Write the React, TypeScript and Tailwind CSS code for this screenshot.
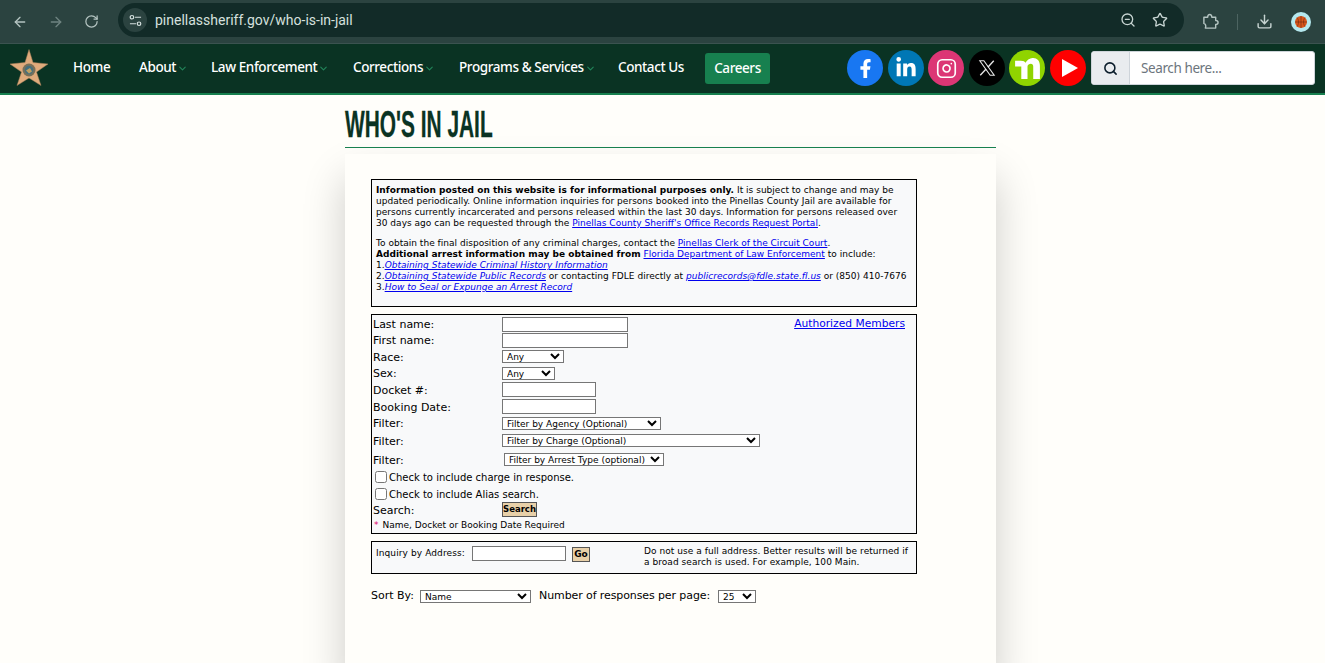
import React from "react";
import { ArrowLeft, ArrowRight, RotateCw, ZoomOut, Star, Download, ChevronDown, Search, Instagram } from "lucide-react";
import { FaFacebookF, FaLinkedinIn } from "react-icons/fa";

const V = "font-['DejaVu_Sans',Verdana,sans-serif]";

function NavItem({ label, caret, cls }: { label: string; caret?: boolean; cls: string }) {
  return (
    <a className={`flex items-center mb-[3px] text-white text-[13.5px] tracking-[-0.4px] font-medium whitespace-nowrap shrink-0 ${cls}`}>
      {label}
      {caret && <ChevronDown size={11} strokeWidth={2.4} className="ml-[1px] mt-[2px] text-[#23855a] shrink-0" />}
    </a>
  );
}

function Social({ bg, children, ml }: { bg: string; children: React.ReactNode; ml: string }) {
  return <div className={`w-9 h-9 shrink-0 mb-[1px] rounded-full flex items-center justify-center text-white ${bg} ${ml}`}>{children}</div>;
}

function Row({ label, h, lt = "mt-[2px]", children }: { label: string; h: string; lt?: string; children?: React.ReactNode }) {
  return (
    <div className={`flex items-center ${h}`}>
      <span className={`w-[129px] shrink-0 text-[11px] text-black ${lt}`}>{label}</span>
      {children}
    </div>
  );
}

const sel = "h-[13px] border border-[#767676] bg-white text-[9px] text-black rounded-none leading-none";
const inp = "h-[15px] border border-[#767676] bg-white block";
const a = "text-[#0000ee] underline";

export default function App() {
  return (
    <div className="w-[1325px] h-[663px] overflow-hidden bg-[#fffefa] font-['Noto_Sans',sans-serif]">
      {/* browser bar */}
      <div className="h-[44px] bg-[#2b4340] border-b border-[#3b5350] flex items-center">
        <ArrowLeft size={16} className="ml-[12px] text-[#b4c4c1] shrink-0" />
        <ArrowRight size={16} className="ml-[20px] text-[#6f8481] shrink-0" />
        <RotateCw size={15} className="ml-[20px] text-[#b4c4c1] shrink-0" />
        <div className="ml-[19px] w-[1066px] h-[34px] shrink-0 rounded-full bg-[#122b28] flex items-center mb-[3px]">
          <div className="ml-[5px] w-6 h-6 rounded-full bg-[#2b4340] flex items-center justify-center">
            <svg viewBox="0 0 14 14" className="w-[13px] h-[13px] text-[#d5e0de]" fill="none" stroke="currentColor" strokeWidth="1.3">
              <circle cx="3.2" cy="3.5" r="1.9" />
              <path d="M6.5 3.5H13M1 10.5H7.5" />
              <circle cx="10.8" cy="10.5" r="1.9" />
            </svg>
          </div>
          <span className="ml-[8px] text-[14px] text-[#d5e0de] font-['Roboto',sans-serif]">pinellassheriff.gov/who-is-in-jail</span>
          <ZoomOut size={16} className="ml-auto text-[#c7d4d2]" />
          <Star size={16} className="ml-[16px] mr-[16px] text-[#c7d4d2]" />
        </div>
        <svg viewBox="0 0 18 18" className="ml-[18px] w-[17px] h-[17px] shrink-0 text-[#b4c4c1]" fill="none" stroke="currentColor" strokeWidth="1.5" strokeLinejoin="round">
          <path d="M2 4.5H6C6 2.5 7 1.5 8.2 1.5C9.4 1.5 10.4 2.5 10.4 4.5H14.5V8C16.5 8 17 9 17 10C17 11 16.5 12 14.5 12V16H3.5C4.5 14 4 11.5 2 11Z" />
        </svg>
        <div className="ml-[18px] w-px h-[16px] bg-[#4d6461] shrink-0" />
        <Download size={17} className="ml-[18px] text-[#c7d4d2] shrink-0" />
        <svg viewBox="0 0 20 20" className="ml-[18px] w-5 h-5 shrink-0">
          <circle cx="10" cy="10" r="10" fill="#b5e8ee" />
          <circle cx="10" cy="10" r="6" fill="#d9561c" />
          <path d="M10 4V16M4 10H16M6 5.5C8 8 8 12 6 14.5M14 5.5C12 8 12 12 14 14.5" stroke="#6b2a10" strokeWidth="0.6" fill="none" />
        </svg>
      </div>

      {/* nav */}
      <nav className="h-[51px] bg-[#0a3323] border-b-2 border-[#17804f] flex items-center">
        <svg viewBox="0 0 40 38" className="ml-[9px] w-[40px] h-[38px] shrink-0 mb-[1px]">
          <path d="M20 0.5 L24 13.5 L39 15 L27.5 23 L32 36.5 L20 29 L8 36.5 L12.5 23 L1 15 L16 13.5 Z" fill="#e0ab7c" stroke="#a87f58" strokeWidth="0.5" />
          <circle cx="20" cy="21" r="6.5" fill="#77705a" />
          <circle cx="20" cy="21" r="4.2" fill="#46707c" />
          <path d="M17 21.5 L21 19 L23 22.5 L20 24.5 Z" fill="#c09f62" />
        </svg>
        <NavItem label="Home" cls="ml-[24px] w-[36px]" />
        <NavItem label="About" caret cls="ml-[30px] w-[47px]" />
        <NavItem label="Law Enforcement" caret cls="ml-[25px] w-[116px]" />
        <NavItem label="Corrections" caret cls="ml-[26px] w-[81px]" />
        <NavItem label="Programs & Services" caret cls="ml-[25px] w-[134px]" />
        <NavItem label="Contact Us" cls="ml-[25px] w-[67px]" />
        <a className="ml-[20px] w-[65px] h-[31px] shrink-0 rounded-[3px] bg-[#17804f] text-white text-[13.5px] tracking-[-0.4px] font-medium flex items-center justify-center mb-[1px]">Careers</a>
        <Social bg="bg-[#1877f2]" ml="ml-[77px]"><FaFacebookF size={19} /></Social>
        <Social bg="bg-[#0077b5]" ml="ml-[5px]"><FaLinkedinIn size={22} /></Social>
        <Social bg="bg-[#dc3675]" ml="ml-[4px]"><Instagram size={21} strokeWidth={1.9} /></Social>
        <Social bg="bg-black" ml="ml-[5px]">
          <svg viewBox="0 0 20 20" className="w-[18px] h-[18px]" fill="none" stroke="#e6e6e6" strokeWidth="1.2">
            <path d="M2 2H6.5L18 18H13.5Z" />
            <path d="M17.5 2L11 9.2M9 11.2L2.5 18" strokeWidth="1.5" />
          </svg>
        </Social>
        <Social bg="bg-[#90d400]" ml="ml-[4px]">
          <svg viewBox="0 0 26 22" className="w-[25px] h-[21px]">
            <path d="M0 3H6C9 3 10 4 11 5C13 1 17 0 19 0C23 0 26 3 26 8V22H19V9C19 7 18 6 16.5 6C15 6 13 7 13 9V22H6.5V9H0Z" fill="#fff" />
          </svg>
        </Social>
        <Social bg="bg-[#ff0000]" ml="ml-[5px]">
          <svg viewBox="0 0 16 18" className="w-4 h-[18px] ml-[3px]"><path d="M0 0L16 9L0 18Z" fill="#fff" /></svg>
        </Social>
        <div className="ml-[5px] w-[224px] h-[34px] shrink-0 flex rounded-[3px] overflow-hidden border border-[#ced4da] bg-white mb-[1px]">
          <div className="w-[38px] bg-[#e9ecef] border-r border-[#ced4da] flex items-center justify-center">
            <Search size={15} strokeWidth={2.5} className="text-[#0d1f2d]" />
          </div>
          <span className="ml-[11px] self-center text-[13.5px] tracking-[-0.4px] text-[#6c757d]">Search here...</span>
        </div>
      </nav>

      {/* content */}
      <main className="w-[651px] ml-[345px]">
        <h1 className="h-[52px] flex items-center pt-[8px] text-[#0a3323] text-[36px] font-bold font-['Liberation_Sans',sans-serif] leading-none whitespace-nowrap">
          <span className="inline-block origin-left scale-x-[0.58] [-webkit-text-stroke:0.3px_#0a3323]">WHO'S IN JAIL</span>
        </h1>
        <div className="relative z-10 h-px bg-[#17804f]" />
        <div className={`mt-[6px] h-[520px] bg-[#fffefa] shadow-[0_24px_40px_rgba(0,0,0,0.2)] pt-[25px] pl-[26px] ${V}`}>
          {/* Info box */}
          <div className="w-[546px] h-[128px] border border-black bg-[#f8f9fa] px-[4px] pt-[5px] text-[9px] tracking-[0.02px] leading-[11px] text-black">
            <p className="whitespace-nowrap"><b>Information posted on this website is for informational purposes only.</b> It is subject to change and may be</p>
            <p className="whitespace-nowrap">updated periodically. Online information inquiries for persons booked into the Pinellas County Jail are available for</p>
            <p className="whitespace-nowrap">persons currently incarcerated and persons released within the last 30 days. Information for persons released over</p>
            <p className="whitespace-nowrap">30 days ago can be requested through the <a className={a}>Pinellas County Sheriff's Office Records Request Portal</a>.</p>
            <p className="mt-[9px] whitespace-nowrap">To obtain the final disposition of any criminal charges, contact the <a className={a}>Pinellas Clerk of the Circuit Court</a>.</p>
            <p className="whitespace-nowrap"><b>Additional arrest information may be obtained from</b> <a className={a}>Florida Department of Law Enforcement</a> to include:</p>
            <p className="whitespace-nowrap">1.<a className={`${a} italic`}>Obtaining Statewide Criminal History Information</a></p>
            <p className="whitespace-nowrap">2.<a className={`${a} italic`}>Obtaining Statewide Public Records</a> or contacting FDLE directly at <a className={`${a} italic`}>publicrecords@fdle.state.fl.us</a> or (850) 410-7676</p>
            <p className="whitespace-nowrap">3.<a className={`${a} italic`}>How to Seal or Expunge an Arrest Record</a></p>
          </div>

          {/* Search form */}
          <div className="relative mt-[7px] w-[546px] h-[220px] border border-black bg-[#f8f9fa] pl-[1px] pt-[1px]">
            <a className={`${a} absolute right-[11px] top-[1px] text-[10.7px]`}>Authorized Members</a>
            <Row label="Last name:" h="h-[16px]"><input className={`${inp} w-[126px]`} /></Row>
            <Row label="First name:" h="h-[16px]"><input className={`${inp} w-[126px]`} /></Row>
            <Row label="Race:" h="h-[17px]" lt="mt-[4px]"><select className={`${sel} w-[62px]`}><option>Any</option></select></Row>
            <Row label="Sex:" h="h-[16px]"><select className={`${sel} w-[53px]`}><option>Any</option></select></Row>
            <Row label="Docket #:" h="h-[17px]" lt="mt-[4px]"><input className={`${inp} w-[94px]`} /></Row>
            <Row label="Booking Date:" h="h-[17px]" lt="mt-[4px]"><input className={`${inp} w-[94px]`} /></Row>
            <Row label="Filter:" h="h-[17px]"><select className={`${sel} w-[159px] mb-[1px]`}><option>Filter by Agency (Optional)</option></select></Row>
            <Row label="Filter:" h="h-[18px]"><select className={`${sel} w-[258px] mb-[1px]`}><option>Filter by Charge (Optional)</option></select></Row>
            <Row label="Filter:" h="h-[19px]" lt="mt-[4px]"><select className={`${sel} w-[160px] ml-[2px]`}><option>Filter by Arrest Type (optional)</option></select></Row>
            <label className="flex items-center h-[17px] text-[10px] text-black">
              <input type="checkbox" className="ml-[2px] w-[12px] h-[12px] mr-[2px] mb-[1px]" />Check to include charge in response.
            </label>
            <label className="flex items-center h-[17px] text-[10px] text-black">
              <input type="checkbox" className="ml-[2px] w-[12px] h-[12px] mr-[2px] mb-[1px]" />Check to include Alias search.
            </label>
            <Row label="Search:" h="h-[15px]">
              <button className="w-[35px] h-[15px] mb-[2px] bg-[#e8d0a8] border border-[#555] text-[8.5px] font-bold text-black leading-none">Search</button>
            </Row>
            <p className="h-[15px] flex items-center text-[9px] text-black"><span className="text-[#e0006a] ml-[1px] mr-[4px]">*</span>Name, Docket or Booking Date Required</p>
          </div>

          {/* Inquiry */}
          <div className="mt-[7px] w-[546px] h-[33px] border border-black bg-[#f8f9fa] flex items-start pl-[4px] pt-[4px]">
            <span className="text-[9px] tracking-[0.1px] leading-[14px] text-black w-[96px] shrink-0">Inquiry by Address:</span>
            <input className={`${inp} w-[94px]`} />
            <button className="ml-[6px] mt-[1px] w-[18px] h-[15px] bg-[#e8d0a8] border border-[#555] text-[9px] font-bold text-black leading-none">Go</button>
            <p className="ml-[54px] text-[9px] tracking-[0.05px] leading-[11px] text-black whitespace-nowrap">Do not use a full address. Better results will be returned if<br />a broad search is used. For example, 100 Main.</p>
          </div>

          {/* Sort */}
          <div className="mt-[15px] flex items-center h-[14px] text-[11px] text-black">
            <span>Sort By:</span>
            <select className={`${sel} w-[111px] ml-[6px]`}><option>Name</option></select>
            <span className="ml-[8px] tracking-[-0.1px]">Number of responses per page:</span>
            <select className={`${sel} w-[38px] ml-[8px]`}><option>25</option></select>
          </div>
        </div>
      </main>
    </div>
  );
}
